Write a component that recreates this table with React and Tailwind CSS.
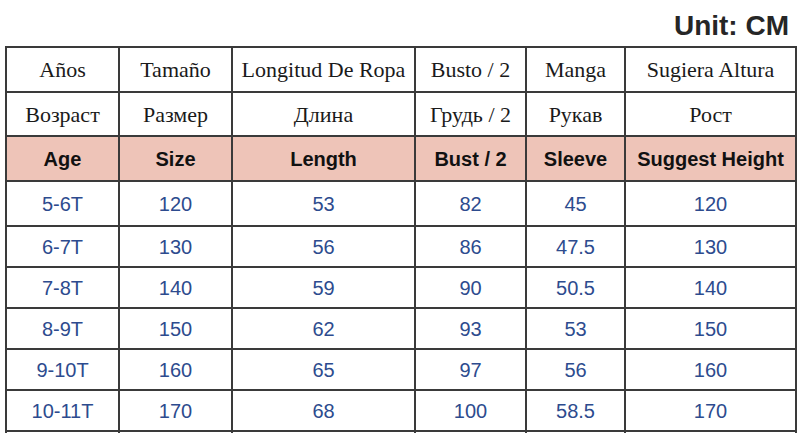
import React from "react";

const cols = "grid-cols-[111px_111px_181px_109px_97px_169px]";

const es = ["Años", "Tamaño", "Longitud De Ropa", "Busto / 2", "Manga", "Sugiera Altura"];
const ru = ["Возраст", "Размер", "Длина", "Грудь / 2", "Рукав", "Рост"];
const en = ["Age", "Size", "Length", "Bust / 2", "Sleeve", "Suggest Height"];
const rows = [
  ["5-6T", "120", "53", "82", "45", "120"],
  ["6-7T", "130", "56", "86", "47.5", "130"],
  ["7-8T", "140", "59", "90", "50.5", "140"],
  ["8-9T", "150", "62", "93", "53", "150"],
  ["9-10T", "160", "65", "97", "56", "160"],
  ["10-11T", "170", "68", "100", "58.5", "170"],
  ["", "", "", "", "", ""],
];

const serif = { fontFamily: '"Liberation Serif", "Times New Roman", serif' };
const sans = { fontFamily: '"Liberation Sans", Arial, sans-serif' };

export default function App() {
  return (
    <div className="w-[800px] h-[433px] overflow-hidden bg-white">
      <div
        className="h-[46px] flex items-end justify-end pr-[11px] pb-[6px] text-[28px] font-bold leading-none text-[#262626]"
        style={sans}
      >
        Unit: CM
      </div>
      <div className="ml-[5px] w-[792px] bg-[#3a3a3a] p-[2px] flex flex-col gap-[2px]">
        <div className={`grid ${cols} gap-[2px] h-[43px]`}>
          {es.map((t, i) => (
            <div key={i} className="bg-white flex items-center justify-center text-[22px] text-[#1a1a1a]" style={serif}>
              {t}
            </div>
          ))}
        </div>
        <div className={`grid ${cols} gap-[2px] h-[42px]`}>
          {ru.map((t, i) => (
            <div key={i} className="bg-white flex items-center justify-center text-[22px] text-[#1a1a1a]" style={serif}>
              {t}
            </div>
          ))}
        </div>
        <div className={`grid ${cols} gap-[2px] h-[43px]`}>
          {en.map((t, i) => (
            <div key={i} className="bg-[#eec4b8] flex items-center justify-center text-[20px] font-bold text-[#111]" style={sans}>
              {t}
            </div>
          ))}
        </div>
        {rows.map((r, ri) => (
          <div key={ri} className={`grid ${cols} gap-[2px] ${ri === 0 ? "h-[43px]" : "h-[39px]"}`}>
            {r.map((t, i) => (
              <div key={i} className="bg-white flex items-center justify-center text-[20px] text-[#2d4b8e]" style={sans}>
                {t}
              </div>
            ))}
          </div>
        ))}
      </div>
    </div>
  );
}
